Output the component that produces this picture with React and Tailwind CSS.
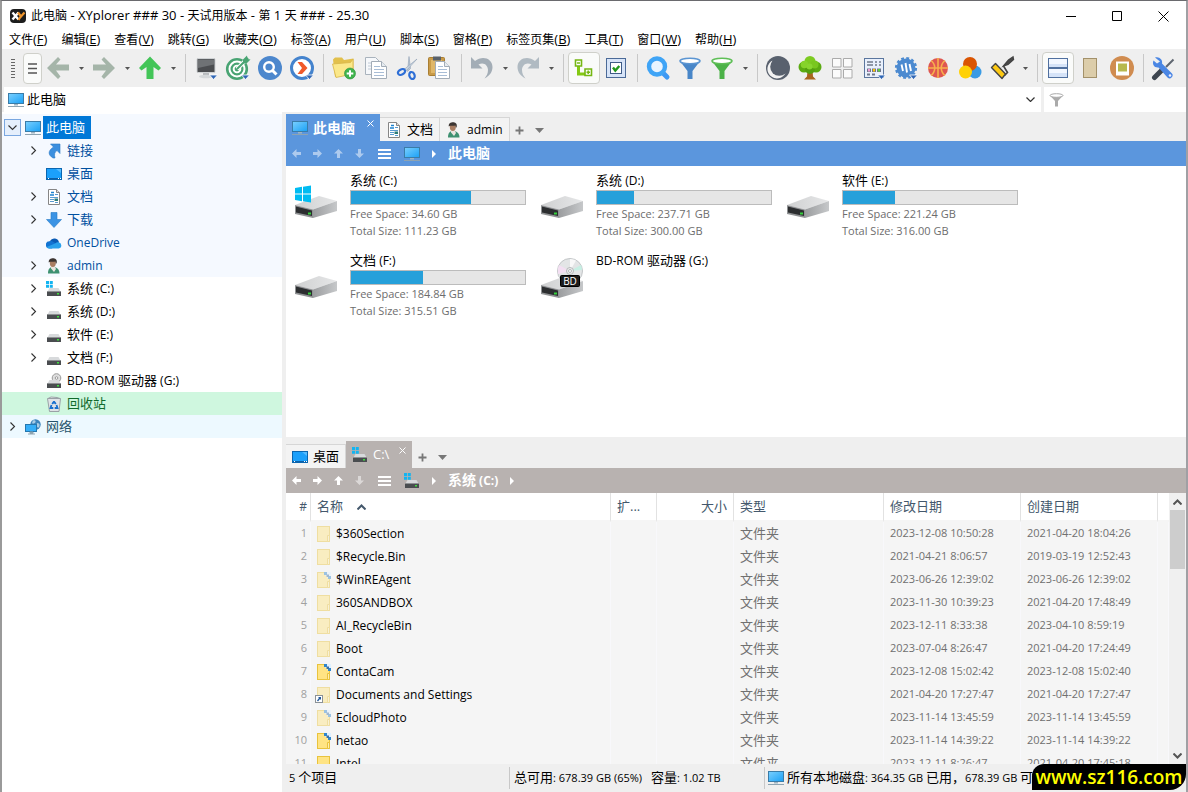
import { useId, useState } from 'react'
import clsx from 'clsx'

const CJK = /([\u3000-\u9fff\uff00-\uffef]+)/

// chinese and latin glyphs are set at different sizes
function Mixed({ children, cjk = 'text-[13px]' }) {
  return children.split(CJK).map((part, i) =>
    CJK.test(part) ? (
      <span key={i} className={cjk}>
        {part}
      </span>
    ) : (
      part
    )
  )
}

/* ---------- small icons ---------- */

function Svg({ w = 16, h = w, box = `0 0 ${w} ${h}`, className, children }) {
  return (
    <svg width={w} height={h} viewBox={box} fill="none" aria-hidden="true" className={clsx('shrink-0', className)}>
      {children}
    </svg>
  )
}

function MonitorIcon() {
  const id = useId()
  return (
    <Svg>
      <defs>
        <linearGradient id={id} x1="0" y1="0" x2="1" y2="1">
          <stop offset="0" stopColor="#7ad0ff" />
          <stop offset="1" stopColor="#1aa0f5" />
        </linearGradient>
      </defs>
      <rect x="0.5" y="1.5" width="15" height="10" fill={`url(#${id})`} stroke="#3a7ca8" />
      <path d="M6 12h4v1.5H6z" fill="#9fb4c2" />
      <path d="M0 14.5h16" stroke="#8ea3b1" />
    </Svg>
  )
}

function DesktopIcon() {
  return (
    <Svg>
      <rect x="0.5" y="2.5" width="15" height="11" fill="#1ba0fb" stroke="#0a66b0" />
      <path d="M10 3h5v4z" fill="#54bbff" />
      <path d="M1 12.5h14" stroke="#0c5fa6" />
      <path d="M2 12.5h1M12 12.5h1M14 12.5h1" stroke="#fff" />
    </Svg>
  )
}

function LinkIcon() {
  return (
    <Svg>
      <path d="M4.500 1h9.500v9.500l-3-3c-2.500 1.500-3 4-2 7.500h-2C2 12 1.500 8 7.500 4z" fill="#3b8fdf" stroke="#2b78c4" strokeWidth="0.600" />
    </Svg>
  )
}

function DocIcon() {
  return (
    <Svg>
      <path d="M2.500.5h8l3 3v12h-11z" fill="#fff" stroke="#868686" />
      <path d="M10.500.5v3h3" fill="#ddd" stroke="#868686" />
      <path d="M5 3.500h3M4 6h4" stroke="#1e83d0" strokeWidth="1.500" />
      <path d="M9 5.500h3M4 8.500h8M4 10.500h4M4 12.500h4M9 13.500h3" stroke="#5a9bd0" />
      <path d="M8.500 9.500h3.500v2.500H8.500z" fill="#2c7d78" />
    </Svg>
  )
}

function DownloadIcon() {
  return (
    <Svg>
      <path d="M5 .5h6v7h4.500L8 15.500.5 7.500H5z" fill="#3b93e4" stroke="#2478c6" strokeWidth="0.600" />
    </Svg>
  )
}

function OneDriveIcon() {
  return (
    <Svg>
      <path d="M4 6a4.800 4.800 0 0 1 9 1.500l-4 3-6-1z" fill="#0a5bb5" />
      <path d="M3.500 6.200C6 5.400 8 7 10 9l-4 4.500H3.500A3.600 3.600 0 0 1 3.500 6.200z" fill="#1273d2" />
      <path d="M12.500 7.200a3.200 3.200 0 0 1 .3 6.300H3c-1 0-2-.8-2.400-1.500L9 8.500c1-.8 2-1.300 3.500-1.300z" fill="#28a0ec" />
    </Svg>
  )
}

function UserIcon() {
  return (
    <Svg>
      <path d="M2 15.500c0-5 2-6.500 5-6.500s6.500 1.500 6.500 6.500z" fill="#3e9171" />
      <path d="M5 8h3.500l1.500 3-2 3-3-3.500z" fill="#e9e4df" />
      <ellipse cx="6.800" cy="5" rx="3" ry="4" fill="#a97d62" />
      <path d="M2.800 4.500C2.300 1 5 .2 7 .2s4.300 1 3.800 4.300L10 6l-.6-2.500C7 4 5 3.500 4 3.800z" fill="#3c3532" />
    </Svg>
  )
}

function SmallDrive({ windows, disc }) {
  return (
    <Svg>
      {disc && (
        <>
          <circle cx="10.500" cy="5" r="4.300" fill="#dedede" stroke="#999" />
          <circle cx="10.500" cy="5" r="1.300" fill="#fff" stroke="#999" />
        </>
      )}
      <path d="M3.500 7h9l2 3.500h-13z" fill="#d8dadc" />
      <path d="M1 10h14v5H1z" fill="#4a4d50" />
      <path d="M1 10h14v1H1z" fill="#8d9092" />
      <path d="M11 12h2v1.500h-2z" fill="#3fe03f" />
      {windows && <path d="M0 0h3v3H0zM3.800 0h3v3h-3zM0 3.800h3v3H0zM3.800 3.800h3v3h-3z" fill="#12b4f1" />}
    </Svg>
  )
}

function RecycleIcon() {
  return (
    <Svg>
      <path d="M1.500 2.500h13l-1.500 13H3.500z" fill="#dfe3e6" stroke="#9aa1a6" />
      <path d="M2 2.500 5 1l6 .5 3 1z" fill="#f8f8f8" stroke="#9aa1a6" />
      <path d="m8 5.500 1.800 2.500M8 5.500 6.200 8M5.500 9 4.500 12h2.800M10.500 9l1 3H8.700" stroke="#1670cf" strokeWidth="1.800" />
    </Svg>
  )
}

function NetworkIcon() {
  return (
    <Svg>
      <circle cx="10.500" cy="5.500" r="5.200" fill="#3d85bd" />
      <path d="M8 1.500c2-.8 3 0 2.500 1.500S8 5 7 4zM12 4c2 0 3 1 2.500 3s-2 2-3 .5z" fill="#a9cde6" />
      <rect x="0.500" y="5.500" width="11" height="7" fill="#35aef8" stroke="#2577ae" />
      <path d="M5 13h3v1.500H5zM3 15h7" fill="#8aa" stroke="#8ea3b1" />
    </Svg>
  )
}

function FolderIcon({ faded, marked, shortcut }) {
  return (
    <Svg className="overflow-visible">
      <g opacity={faded ? 0.45 : 1}>
        <rect x="0.500" y="0.500" width="12" height="15" fill="#ffe484" stroke="#e9c33d" />
        <path d="M10.500 9.500h2v6h-2z" fill="#ffeeb0" stroke="#e9c33d" />
        {marked && (
          <>
            <path d="M9 0h5v6h-3L8 3z" fill="#dff0ff" />
            <path d="M7 0h3v3H7zM11 4h3v3h-3z" fill="#2f86cc" />
            <path d="M9.500 2.500H12V5H9.500z" fill="#3c6fa0" />
          </>
        )}
      </g>
      {shortcut && (
        <>
          <rect x="-1.500" y="8.500" width="7" height="7" fill="#fff" stroke="#8b9197" />
          <path d="M1 10h3v3l-1-1-2 2.500-1-1L2 11z" fill="#245a9c" />
        </>
      )}
    </Svg>
  )
}

function BigDrive({ windows, disc }) {
  const id = useId()
  return (
    <Svg w={44} h={50}>
      <defs>
        <linearGradient id={`${id}t`} x1="0" y1="0" x2="1" y2="0">
          <stop offset="0" stopColor="#cfd0d1" />
          <stop offset="1" stopColor="#e6e7e8" />
        </linearGradient>
        <linearGradient id={`${id}s`} x1="0" y1="0" x2="1" y2="0">
          <stop offset="0" stopColor="#9b9d9f" />
          <stop offset="1" stopColor="#c6c8ca" />
        </linearGradient>
      </defs>
      <path d="m1 34 24-9 18 5-24 8.500z" fill={`url(#${id}t)`} />
      <path d="m19 38.500 24-8.500v10l-24 7z" fill={`url(#${id}s)`} />
      <path d="m1 34 18 4.500V47L1 43z" fill="#909294" />
      <path d="m2 35.500 16 4v5.500L2 41.500z" fill="#2c2e30" />
      <path d="M14 41.500h3v2h-3z" fill="#35d13c" />
      {windows && <path d="m1 17 7-1.200v6.700H1zM9 15.700l8-1.200v8H9zM1 23.500h7v6.700L1 29zM9 23.500h8v8l-8-1.200z" fill="#00bcf2" />}
      {disc && (
        <>
          <circle cx="30" cy="20" r="12.500" fill="#e3e5e6" stroke="#c2c5c7" />
          <path d="m30 20-11-6a12.500 12.500 0 0 0-1 9z" fill="#f3dff2" />
          <path d="m30 20 11-6a12.500 12.500 0 0 1 1 5z" fill="#c6efe3" />
          <path d="m30 20 0-12a12 12 0 0 1 6 1.500z" fill="#f8f8f8" />
          <circle cx="30" cy="20" r="3.500" fill="#eee" stroke="#b5b8ba" />
          <circle cx="30" cy="20" r="1.500" fill="#fff" stroke="#b5b8ba" />
          <rect x="20.500" y="24.500" width="19" height="11" rx="1" fill="#1b1b1b" stroke="#000" />
          <text x="30" y="33.500" textAnchor="middle" fontSize="10" fill="#fff" fontFamily="Open Sans, sans-serif">
            BD
          </text>
        </>
      )}
    </Svg>
  )
}

/* ---------- toolbar icons, all on a 26px box ---------- */

const more = <path d="M16.500 20h8l-4 4.500z" fill="#2f66b5" stroke="#fff" strokeWidth="0.800" />

const glyphs = {
  back: <path d="M2 13 13 2l2.500 2.500L11 9.500h13v6H11l4.500 6L13 24z" fill="#a5b5a9" />,
  forward: <path d="M24 13 13 2l-2.500 2.500L15 9.500H2v6h13l-4.500 6L13 24z" fill="#a5b5a9" />,
  up: <path d="M13 1.500 24 13l-2.500 2.500L16.500 12v12h-7V12l-5 3.500L2 13z" fill="#43c558" />,
  computer: (
    <>
      <rect x="4" y="3.500" width="18" height="14" rx="1" fill="#4b4d50" stroke="#cfd2d4" />
      <path d="M5 4.500h16v5L5 13z" fill="#6f7275" />
      <path d="M10 18h6v2.500h-6z" fill="#b8bbbe" />
      <ellipse cx="13" cy="21.500" rx="7" ry="1.800" fill="#d5d8da" />
      {more}
    </>
  ),
  target: (
    <>
      <circle cx="12" cy="14" r="9.800" fill="#fff" stroke="#49a473" strokeWidth="2.600" />
      <circle cx="12" cy="14" r="5.400" stroke="#49a473" strokeWidth="2.200" />
      <circle cx="12" cy="14" r="2.400" fill="#49a473" />
      <path d="m12 14 9-9" stroke="#fff" strokeWidth="4" />
      <path d="m12 14 11-11" stroke="#49a473" strokeWidth="2" />
      <path d="M18 4.500 22 .5l.5 3.500 3 .5-4 4h-3.500z" fill="#49a473" />
      {more}
    </>
  ),
  find: (
    <>
      <circle cx="13" cy="13" r="12" fill="#4c87cd" />
      <circle cx="12" cy="12" r="4.800" stroke="#fff" strokeWidth="2.400" />
      <path d="m15.500 15.500 4 4" stroke="#fff" strokeWidth="3" />
    </>
  ),
  go: (
    <>
      <circle cx="13" cy="13" r="10.500" fill="#fff" stroke="#4483cd" strokeWidth="3" />
      <path d="M8.500 7h4.500l5.500 6-5.500 6H8.500l4.500-6z" fill="#f05a2a" />
      {more}
    </>
  ),
  newFolder: (
    <>
      <path d="M2 4.500 4 2.500h7l2 2.500 9.500-1.500v15L4 22z" fill="#e2c04c" />
      <path d="m1.500 9 18-1.500L22 4v15L5 22.500z" fill="#fbe88a" stroke="#d8b547" strokeWidth="0.800" />
      <circle cx="19" cy="18.500" r="5.500" fill="#3fb44d" stroke="#2e8f3c" strokeWidth="0.600" />
      <path d="M19 15.200v6.600M15.700 18.500h6.600" stroke="#fff" strokeWidth="2" />
    </>
  ),
  copy: (
    <>
      <path d="M2.500 2.500h10l4 4v13h-14z" fill="#f6f8fb" stroke="#a9b3bd" />
      <path d="M5 8h5M5 11h5M5 14h5" stroke="#c0cad6" />
      <path d="M8.500 6.500h10l5 5v12h-15z" fill="#fff" stroke="#a2acb7" />
      <path d="M18.500 6.500v5h5" fill="#e6ebf0" stroke="#a2acb7" />
      <path d="M11 11.500h6M11 14.500h10M11 17.500h10M11 20.500h10" stroke="#a8bdd6" />
    </>
  ),
  cut: (
    <>
      <path d="m14 1.500 1.500 12-3 3z" fill="#b9c7d6" stroke="#8fa0b3" strokeWidth="0.600" />
      <path d="m22 4-11 12-2-1.500z" fill="#ccd7e3" stroke="#8fa0b3" strokeWidth="0.600" />
      <ellipse cx="6.500" cy="17" rx="3.800" ry="2.600" stroke="#2f6fd6" strokeWidth="2.200" transform="rotate(-25 6.500 17)" />
      <ellipse cx="17" cy="20.500" rx="2.600" ry="3.600" stroke="#2f6fd6" strokeWidth="2.200" transform="rotate(-20 17 20.500)" />
    </>
  ),
  paste: (
    <>
      <rect x="1.500" y="2.500" width="16" height="18" rx="1" fill="#c99b48" stroke="#a97e33" />
      <path d="M4 5h11v13H4z" fill="#e0b768" />
      <path d="M6 1.500h8v4H6z" fill="#59616a" />
      <path d="M8.500 6.500h9l5 5v12h-14z" fill="#fff" stroke="#a2acb7" />
      <path d="M17.500 6.500v5h5" fill="#e6ebf0" stroke="#a2acb7" />
      <path d="M11 11.500h5M11 14.500h9M11 17.500h9M11 20.500h9" stroke="#a8bdd6" />
    </>
  ),
  undo: <path d="M2 2v11.500h11.500L9.500 9.500c5-3 9.500.5 9.500 5.500 0 3.500-1.500 6-3.500 8.500 5-2.500 8-6.500 8-11.500C23.500 3 13 0 6 6z" fill="#a3adb6" />,
  redo: <path d="M24 2v11.500H12.500l4-4c-5-3-9.500.5-9.500 5.500 0 3.500 1.500 6 3.500 8.500-5-2.500-8-6.500-8-11.500C2.500 3 13 0 20 6z" fill="#b0bac2" />,
  tree: (
    <>
      <path d="M7.500 11v8H16" stroke="#84c914" strokeWidth="3" />
      <path d="M4.500 5h6v6h-6zM14 14h6.500v6.500H14z" fill="#fff" stroke="#76b714" strokeWidth="1.600" />
      <path d="M6 8h3M17.200 15.500v3.500M15.500 17.200H19" stroke="#76b714" strokeWidth="1.500" />
    </>
  ),
  check: (
    <>
      <rect x="3.500" y="3.500" width="19" height="19" fill="#d7e4f8" stroke="#4b6a98" />
      <rect x="7.500" y="7.500" width="11" height="11" fill="#fff" stroke="#3f5c87" />
      <path d="m10 12.500 2.300 3 4-4.500" stroke="#21981d" strokeWidth="2.400" />
    </>
  ),
  magnifier: (
    <>
      <path d="m17 17 5 5" stroke="#3d98f3" strokeWidth="5" strokeLinecap="round" />
      <circle cx="12" cy="11.500" r="8" fill="#e9f4ff" stroke="#3fa4f6" strokeWidth="4.400" />
    </>
  ),
  filterBlue: (
    <>
      <path d="M2.500 5.500 10.500 16v8h5v-8l8-10.500z" fill="#4886c8" />
      <ellipse cx="13" cy="6" rx="10" ry="2.800" fill="#fff" stroke="#5b95d2" strokeWidth="1.600" />
    </>
  ),
  filterGreen: (
    <>
      <path d="M2.500 5.500 10.500 16v8h5v-8l8-10.500z" fill="#4cb248" />
      <ellipse cx="13" cy="6" rx="10" ry="2.800" fill="#fff" stroke="#5fbf57" strokeWidth="1.600" />
    </>
  ),
  moon: (
    <>
      <circle cx="13" cy="13" r="12" fill="#59616e" />
      <path d="M7.500 5.500a9.500 9.500 0 1 0 13 12.500A10.200 10.200 0 0 1 7.500 5.500z" fill="#f2f2f2" />
      <circle cx="14.200" cy="11.800" r="9" fill="#59616e" />
    </>
  ),
  oak: (
    <>
      <path d="M10.500 15h5l.5 6.500 3 3H7l3-3z" fill="#a8651d" />
      <circle cx="7" cy="12" r="5.500" fill="#5cab12" />
      <circle cx="19" cy="12" r="5.500" fill="#5cab12" />
      <circle cx="13" cy="14" r="5" fill="#54a00f" />
      <circle cx="13" cy="6.500" r="5.500" fill="#7dcb22" />
      <circle cx="7.500" cy="9.500" r="3.800" fill="#86d32b" />
      <circle cx="17.500" cy="9.500" r="4" fill="#79c71f" />
      <circle cx="12.500" cy="11.500" r="3" fill="#88d52f" />
    </>
  ),
  tiles: (
    <path d="M3.500 3.500h8.500v8.500h-8.500zM14.500 3.500H23v8.500h-8.500zM3.500 14.500h8.500V23h-8.500zM14.500 14.500H23V23h-8.500z" fill="#fbfbfb" stroke="#ababab" />
  ),
  calendar: (
    <>
      <rect x="3.500" y="3.500" width="19" height="19" fill="#e9f0fc" stroke="#5b769e" />
      <path d="M6 7h6M6 10h6M14 7h2M14 10h2M18 7h2M18 10h2" stroke="#70798a" strokeWidth="1.600" />
      <path d="M6 19.500h3M11 19.500h3" stroke="#70798a" strokeWidth="2" />
      <path d="M6 13.500h4v3.500H6zM11 13.500h4v3.500h-4zM16 13.500h4v3.500h-4z" fill="#70798a" />
      <path d="M7 14h2v2.500H7z" fill="#f09ad4" />
      <path d="M12 14h2v2.500h-2z" fill="#ffc400" />
      <path d="M17 14h2v2.500h-2z" fill="#5cd03a" />
      {more}
    </>
  ),
  gear: (
    <>
      <circle cx="13" cy="13" r="9.500" fill="#4c8ad0" />
      <circle cx="13" cy="13" r="9.800" stroke="#4c8ad0" strokeWidth="2.600" strokeDasharray="2.800 2.330" />
      <path d="m8.500 9.500 1.500 6.500M12.500 8l1.500 9.500M16.500 9l1.500 7" stroke="#fff" strokeWidth="1.900" />
      {more}
    </>
  ),
  ball: (
    <>
      <circle cx="13" cy="13" r="10" fill="#de5650" />
      <path d="M13 3v20M3 13h20M6 5.500c5 4 5 11 0 15M20 5.500c-5 4-5 11 0 15" stroke="#f7b04c" strokeWidth="1.600" />
    </>
  ),
  colors: (
    <>
      <circle cx="18" cy="17" r="6.500" fill="#3a9be4" />
      <circle cx="13" cy="9" r="7" fill="#da5502" />
      <circle cx="8.500" cy="17" r="6.500" fill="#ffd106" />
    </>
  ),
  roller: (
    <>
      <path d="m14.500 11 5-6L24 2l.5 2.500-5.500 5z" fill="#4a4a4a" stroke="#444" strokeWidth="1.400" />
      <path d="m14.500 11 4 6.500-3 3" stroke="#444" strokeWidth="1.600" />
      <path d="m2.500 12.500 4-4L16.500 19l-3.500 4.500z" fill="#fdc913" stroke="#444" strokeWidth="1.400" strokeLinejoin="round" />
    </>
  ),
  panes: (
    <>
      <rect x="3.500" y="3.500" width="19" height="19" fill="#f2f7ff" stroke="#50709f" />
      <path d="M4 9h18v3H4zM4 18h18v4H4z" fill="#d5e3f8" />
      <path d="M3 13h20" stroke="#50709f" strokeWidth="2" />
    </>
  ),
  page: <rect x="6.500" y="3.500" width="13" height="19" fill="#dccdaa" stroke="#a3916a" />,
  photo: (
    <>
      <circle cx="13" cy="13" r="12" fill="#d08c50" />
      <path d="M7 6.500h13v14H7z" fill="#fff" />
      <path d="M9 8.500h9v8H9z" fill="#b7b94e" />
    </>
  ),
  tools: (
    <>
      <path d="M22.500 4.500 15 12" stroke="#5f6670" strokeWidth="2" />
      <path d="m3.500 22.500 7-7" stroke="#3e4650" strokeWidth="5" strokeLinecap="round" />
      <path d="M4 2.500c4-1.500 8 2 7 6l9.500 9.500a3 3 0 0 1-4 4.500L7.500 12.500C3 13 1 9 2.500 5.500l3.500 3 3-2z" fill="#4a86e4" />
      <circle cx="19" cy="20.500" r="1.300" fill="#eef" />
    </>
  ),
}

const toolbar = [
  ['back', '后退', 'menu'], ['forward', '前进', 'menu'], ['up', '向上', 'menu'], null,
  ['computer', '位置'], ['target', '目标'], ['find', '查找'], ['go', '转到'], null,
  ['newFolder', '新建文件夹'], ['copy', '复制'], ['cut', '剪切'], ['paste', '粘贴'], null,
  ['undo', '撤销', 'menu'], ['redo', '重做', 'menu'], null,
  ['tree', '显示树', 'on'], ['check', '复选框'], null,
  ['magnifier', '搜索'], ['filterBlue', '可视过滤'], ['filterGreen', '快速过滤', 'menu'], null,
  ['moon', '深色模式'], ['oak', '迷你树'], ['tiles', '平铺'], ['calendar', '视图'], ['gear', '设置'],
  ['ball', '幽灵过滤'], ['colors', '颜色过滤'], ['roller', '涂色', 'menu'], null,
  ['panes', '双窗格', 'on'], ['page', '预览'], ['photo', '浮动预览'], null,
  ['tools', '配置'],
]

const menus = [
  ['文件', 'F'], ['编辑', 'E'], ['查看', 'V'], ['跳转', 'G'], ['收藏夹', 'O'], ['标签', 'A'], ['用户', 'U'],
  ['脚本', 'S'], ['窗格', 'P'], ['标签页集', 'B'], ['工具', 'T'], ['窗口', 'W'], ['帮助', 'H'],
]

const blue = 'text-[#0050a0]'

const tree = [
  { label: '链接', icon: <LinkIcon />, more: true, color: blue, bg: 'bg-[#f5f9ff]' },
  { label: '桌面', icon: <DesktopIcon />, color: blue, bg: 'bg-[#f5f9ff]' },
  { label: '文档', icon: <DocIcon />, more: true, color: blue, bg: 'bg-[#f5f9ff]' },
  { label: '下载', icon: <DownloadIcon />, more: true, color: blue, bg: 'bg-[#f5f9ff]' },
  { label: 'OneDrive', icon: <OneDriveIcon />, color: blue, bg: 'bg-[#f5f9ff]' },
  { label: 'admin', icon: <UserIcon />, more: true, color: blue, bg: 'bg-[#f5f9ff]' },
  { label: '系统 (C:)', icon: <SmallDrive windows />, more: true },
  { label: '系统 (D:)', icon: <SmallDrive />, more: true },
  { label: '软件 (E:)', icon: <SmallDrive />, more: true },
  { label: '文档 (F:)', icon: <SmallDrive />, more: true },
  { label: 'BD-ROM 驱动器 (G:)', icon: <SmallDrive disc /> },
  { label: '回收站', icon: <RecycleIcon />, color: 'text-[#126a2c]', bg: 'bg-[#cff7df]' },
]

const drives = [
  { name: '系统 (C:)', free: '34.60 GB', total: '111.23 GB', used: 69, windows: true },
  { name: '系统 (D:)', free: '237.71 GB', total: '300.00 GB', used: 21 },
  { name: '软件 (E:)', free: '221.24 GB', total: '316.00 GB', used: 30 },
  { name: '文档 (F:)', free: '184.84 GB', total: '315.51 GB', used: 41.5 },
  { name: 'BD-ROM 驱动器 (G:)', disc: true },
]

const files = [
  { name: '$360Section', faded: true, modified: '2023-12-08 10:50:28', created: '2021-04-20 18:04:26' },
  { name: '$Recycle.Bin', faded: true, modified: '2021-04-21 8:06:57', created: '2019-03-19 12:52:43' },
  { name: '$WinREAgent', faded: true, marked: true, modified: '2023-06-26 12:39:02', created: '2023-06-26 12:39:02' },
  { name: '360SANDBOX', faded: true, modified: '2023-11-30 10:39:23', created: '2021-04-20 17:48:49' },
  { name: 'AI_RecycleBin', faded: true, modified: '2023-12-11 8:33:38', created: '2023-04-10 8:59:19' },
  { name: 'Boot', faded: true, modified: '2023-07-04 8:26:47', created: '2021-04-20 17:24:49' },
  { name: 'ContaCam', marked: true, modified: '2023-12-08 15:02:42', created: '2023-12-08 15:02:40' },
  { name: 'Documents and Settings', faded: true, shortcut: true, modified: '2021-04-20 17:27:47', created: '2021-04-20 17:27:47' },
  { name: 'EcloudPhoto', faded: true, marked: true, modified: '2023-11-14 13:45:59', created: '2023-11-14 13:45:59' },
  { name: 'hetao', marked: true, modified: '2023-11-14 14:39:22', created: '2023-11-14 14:39:22' },
  { name: 'Intel', modified: '2023-12-11 8:26:47', created: '2021-04-20 17:45:18' },
]

function Caret({ label }) {
  return (
    <button type="button" aria-label={label} className="flex h-8 w-[14px] items-center justify-center">
      <Svg w={5} h={3}>
        <path d="M0 0h5L2.500 3z" fill="#555" />
      </Svg>
    </button>
  )
}

function TitleBar() {
  return (
    <header className="flex h-[30px] shrink-0 items-center bg-white pl-2">
      <Svg>
        <rect width="16" height="14" y="1" rx="4" fill="#1d1d1d" />
        <path d="m2.500 4.500 6 7M8.500 4.500l-6 7" stroke="#fff" strokeWidth="2.400" />
        <path d="m8 4.500 3 4 3.500-4M11 8l-2.500 4" stroke="#f0962d" strokeWidth="2.200" />
      </Svg>
      <h1 className="ml-[5px] flex-1 text-[13px]">
        <Mixed cjk="text-xs">此电脑 - XYplorer ### 30 - 天试用版本 - 第 1 天 ### - 25.30</Mixed>
      </h1>
      <button type="button" aria-label="最小化" className="flex h-full w-[46px] items-center justify-center">
        <Svg w={11}><path d="M0 5.500h10" stroke="#000" /></Svg>
      </button>
      <button type="button" aria-label="最大化" className="flex h-full w-[46px] items-center justify-center">
        <Svg w={11}><path d="M.5.5h9v9h-9z" stroke="#000" /></Svg>
      </button>
      <button type="button" aria-label="关闭" className="flex h-full w-[46px] items-center justify-center">
        <Svg w={11}><path d="m.5.5 10 10M10.500.5l-10 10" stroke="#000" /></Svg>
      </button>
    </header>
  )
}

function Toolbar() {
  return (
    <div role="toolbar" className="flex h-[38px] shrink-0 items-center bg-[#efefef]">
      <div className="flex w-[21px] justify-center">
        <Svg w={4} h={19}><path d="M2 0v19" stroke="#666" strokeWidth="4" strokeDasharray="1 2" /></Svg>
      </div>
      <button
        type="button"
        aria-label="菜单"
        className="flex h-[31px] w-[19px] items-center justify-center rounded-[4px] border border-[#cfd0ca] bg-[#fafbfa]"
      >
        <Svg w={9} h={11}><path d="M0 1h9M0 5.500h9M0 10h9" stroke="#555" strokeWidth="1.500" /></Svg>
      </button>
      {toolbar.map((item, i) =>
        item ? (
          <div key={item[0]} className="flex items-center">
            <button
              type="button"
              title={item[1]}
              aria-label={item[1]}
              className={clsx(
                'flex h-8 w-8 items-center justify-center',
                item[2] === 'on' && 'rounded-[4px] border border-[#cfd0ca] bg-[#fafbfa]'
              )}
            >
              <Svg w={26}>{glyphs[item[0]]}</Svg>
            </button>
            {item[2] === 'menu' && <Caret label={`${item[1]}选项`} />}
          </div>
        ) : (
          <div key={i} className="flex w-[10px] justify-center">
            <div className="h-7 w-px bg-[#c8c8c8]" />
          </div>
        )
      )}
    </div>
  )
}

function AddressBar() {
  const [path, setPath] = useState('此电脑')
  const [filter, setFilter] = useState('')
  return (
    <div className="flex h-[25px] shrink-0 gap-[3px] bg-[#efefef] pl-[2px]">
      <div className="flex min-w-0 flex-1 items-center bg-white pl-1">
        <MonitorIcon />
        <input
          aria-label="地址"
          value={path}
          onChange={(e) => setPath(e.target.value)}
          className="ml-[3px] min-w-0 flex-1 text-[13px] outline-none"
        />
        <button type="button" aria-label="历史" className="flex h-full w-[22px] items-center justify-center">
          <Svg w={9} h={5}><path d="m.5.5 4 4 4-4" stroke="#333" strokeWidth="1.200" /></Svg>
        </button>
      </div>
      <div className="flex w-[142px] items-center bg-white pl-[5px]">
        <Svg w={15} h={14}>
          <path d="M1 2.500 6 8v5.500h3V8l5-5.500z" fill="#aaa" />
          <ellipse cx="7.500" cy="2.500" rx="6.500" ry="1.800" fill="#fff" stroke="#aaa" />
        </Svg>
        <input
          aria-label="过滤"
          value={filter}
          onChange={(e) => setFilter(e.target.value)}
          className="min-w-0 flex-1 text-xs outline-none"
        />
      </div>
    </div>
  )
}

function Expander({ open, boxed }) {
  return (
    <button
      type="button"
      aria-label={open ? '折叠' : '展开'}
      className={clsx('mr-1 flex h-[17px] w-[17px] shrink-0 items-center justify-center', boxed && 'border border-[#7aa7e0] bg-[#e5effc]')}
    >
      <Svg w={9}>
        <path d={open ? 'm.5 2.500 4 4 4-4' : 'm2.500.5 4 4-4 4'} stroke="#333" strokeWidth="1.100" />
      </Svg>
    </button>
  )
}

function TreeLabel({ children, className }) {
  return (
    <button type="button" className={clsx('ml-[2px] h-full pr-[6px] pl-[3px] text-xs whitespace-nowrap', className)}>
      <Mixed>{children}</Mixed>
    </button>
  )
}

function Tree() {
  return (
    <nav aria-label="文件夹" className="w-[280px] shrink-0 overflow-hidden bg-white pt-[2px]">
      <div className="bg-[#f5f9ff] pt-[2px]">
        <div className="flex h-[23px] items-center pl-[2px]">
          <Expander open boxed />
          <MonitorIcon />
          <TreeLabel className="bg-[#0078d7] text-white">此电脑</TreeLabel>
        </div>
      </div>
      <ul>
        {tree.map((n) => (
          <li key={n.label} className={clsx('flex h-[23px] items-center pl-[23px]', n.bg)}>
            {n.more ? <Expander /> : <span className="w-[21px] shrink-0" />}
            {n.icon}
            <TreeLabel className={n.color}>{n.label}</TreeLabel>
          </li>
        ))}
      </ul>
      <div className="flex h-[23px] items-center bg-[#edf9ff] pl-[2px]">
        <Expander />
        <NetworkIcon />
        <TreeLabel className="text-[#26536a]">网络</TreeLabel>
      </div>
    </nav>
  )
}

function Tab({ icon, children, active, className }) {
  if (active) {
    return (
      <div className={clsx('flex items-center self-stretch pl-[6px] text-white', className)}>
        {icon}
        <button type="button" role="tab" aria-selected="true" className="ml-[5px] pr-1 text-[13px]">
          <Mixed cjk="text-[14px] font-bold">{children}</Mixed>
        </button>
        <button type="button" aria-label="关闭标签" className="mt-[6px] mr-[6px] ml-auto self-start">
          <Svg w={7}><path d="m.5.5 6 6M6.500.5l-6 6" stroke="#fff" /></Svg>
        </button>
      </div>
    )
  }
  return (
    <button
      type="button"
      role="tab"
      aria-selected="false"
      className="flex h-6 items-center gap-[5px] self-end border-t border-r border-[#d6d6d6] bg-[#f3f3f3] px-[6px] text-xs"
    >
      {icon}
      <span><Mixed>{children}</Mixed></span>
    </button>
  )
}

function TabEnd() {
  return (
    <div className="mb-px flex h-5 items-center self-end">
      <button type="button" aria-label="新标签" className="flex w-5 justify-center">
        <Svg w={9}><path d="M4.500.5v8M.5 4.500h8" stroke="#777" strokeWidth="1.800" /></Svg>
      </button>
      <button type="button" aria-label="标签列表" className="flex w-5 justify-center">
        <Svg w={9} h={5}><path d="M0 0h9L4.500 5z" fill="#777" /></Svg>
      </button>
    </div>
  )
}

const dirs = [
  ['后退', 'rotate-0'],
  ['前进', 'rotate-180'],
  ['向上', 'rotate-90'],
  ['向下', '-rotate-90'],
]

function PathBar({ dim, icon, children, tail, className }) {
  return (
    <div className={clsx('flex h-[25px] shrink-0 items-center text-white', className)}>
      {dirs.map(([label, turn], i) => (
        <button key={label} type="button" aria-label={label} className="flex w-[21px] justify-center">
          <Svg w={9} className={clsx(turn, (dim || i === 3) && 'opacity-50')}>
            <path d="M0 4.500 4.500 0v3H9v3H4.500v3z" fill="#fff" />
          </Svg>
        </button>
      ))}
      <button type="button" aria-label="菜单" className="flex w-7 justify-center">
        <Svg w={13} h={10}><path d="M0 1h13M0 5h13M0 9h13" stroke="#fff" strokeWidth="2" /></Svg>
      </button>
      <span className="flex w-7 justify-center">{icon}</span>
      <Svg w={16} h={8}><path d="m6 0 4 4-4 4z" fill="#fff" /></Svg>
      <button type="button" className="mx-[6px] text-xs font-bold">
        <Mixed cjk="text-[14px]">{children}</Mixed>
      </button>
      {tail && <Svg w={16} h={8}><path d="m6 0 4 4-4 4z" fill="#fff" /></Svg>}
    </div>
  )
}

function Drive({ d }) {
  return (
    <li className="flex h-20 gap-3">
      <BigDrive windows={d.windows} disc={d.disc} />
      <div className="w-44 text-[11px] leading-[17px] text-[#6d6d6d]">
        <p className="text-xs leading-[19px] whitespace-nowrap text-black">
          <Mixed>{d.name}</Mixed>
        </p>
        {d.free && (
          <>
            <div className="h-[15px] border border-[#bcbcbc] bg-[#e6e6e6]">
              <div className="h-full bg-[#26a0da]" style={{ width: `${d.used}%` }} />
            </div>
            <p>Free Space: {d.free}</p>
            <p>Total Size: {d.total}</p>
          </>
        )}
      </div>
    </li>
  )
}

function TopPane() {
  return (
    <section className="flex min-h-0 flex-[325_1_0px] flex-col">
      <div role="tablist" className="flex h-[29px] shrink-0 pt-[2px]">
        <Tab active icon={<MonitorIcon />} className="w-[94px] bg-[#5b96dd]">此电脑</Tab>
        <Tab icon={<DocIcon />}>文档</Tab>
        <Tab icon={<UserIcon />}>admin</Tab>
        <TabEnd />
      </div>
      <PathBar dim icon={<MonitorIcon />} className="bg-[#5b96dd]">此电脑</PathBar>
      <ul className="grid min-h-0 flex-1 grid-cols-[repeat(auto-fill,246px)] content-start overflow-hidden bg-white pt-[5px] pl-2">
        {drives.map((d) => (
          <Drive key={d.name} d={d} />
        ))}
      </ul>
    </section>
  )
}

const th = 'h-[29px] border-r border-r-[#e2e2e2] border-b-2 border-b-[#f5f5f5] bg-white px-[6px] text-left text-[13px] font-normal whitespace-nowrap'

function FileTable() {
  return (
    <div className="flex min-h-0 flex-1 bg-[#f5f5f5]">
      <div className="min-w-0 flex-1 overflow-hidden">
        <table className="w-full table-fixed border-separate border-spacing-0">
          <colgroup>
            <col className="w-[25px]" />
            <col />
            <col className="w-[46px]" />
            <col className="w-[77px]" />
            <col className="w-[150px]" />
            <col className="w-[137px]" />
            <col className="w-[137px]" />
            <col className="w-[11px]" />
          </colgroup>
          <thead className="text-[#44586c]">
            <tr>
              <th className="h-[29px] border-r border-b-2 border-r-[#e2e2e2] border-b-[#f5f5f5] bg-white pr-[3px] text-right text-xs font-normal">#</th>
              <th className={th}>
                <span className="flex items-center gap-[14px]">
                  名称
                  <Svg w={9} h={6}><path d="m.5 5.500 4-4 4 4" stroke="#44586c" strokeWidth="2" /></Svg>
                </span>
              </th>
              <th className={th}>扩...</th>
              <th className={clsx(th, 'text-right')}>大小</th>
              <th className={th}>类型</th>
              <th className={th}>修改日期</th>
              <th className={th}>创建日期</th>
              <th aria-label="空" className="border-b-2 border-b-[#f5f5f5] bg-white" />
            </tr>
          </thead>
          <tbody className="text-[11px] text-[#707070] [&_td]:h-[23px] [&_td]:border-r [&_td]:border-[#f8f8fb] [&_td]:py-0">
            {files.map((f, i) => (
              <tr key={f.name}>
                <td className="pr-[3px] text-right text-[#a0a0a0]">{i + 1}</td>
                <td className="pl-[6px]">
                  <span className="flex items-center gap-[3px] text-xs text-black">
                    <FolderIcon faded={f.faded} marked={f.marked} shortcut={f.shortcut} />
                    {f.name}
                  </span>
                </td>
                <td />
                <td />
                <td className="pl-[6px] text-[13px]">文件夹</td>
                <td className="pl-[6px] whitespace-nowrap">{f.modified}</td>
                <td className="pl-[6px] whitespace-nowrap">{f.created}</td>
                <td />
              </tr>
            ))}
          </tbody>
        </table>
      </div>
      <div className="flex w-[17px] shrink-0 flex-col items-center bg-[#f0f0f0]">
        <button type="button" aria-label="向上滚动" className="flex h-[17px] w-full items-center justify-center">
          <Svg w={9} h={6}><path d="m.5 5.500 4-4 4 4" stroke="#555" strokeWidth="2" /></Svg>
        </button>
        <div className="h-[59px] w-[15px] bg-[#cdcdcd]" />
        <button type="button" aria-label="向下滚动" className="mt-auto flex h-[17px] w-full items-center justify-center">
          <Svg w={9} h={6}><path d="m.5.5 4 4 4-4" stroke="#555" strokeWidth="2" /></Svg>
        </button>
      </div>
    </div>
  )
}

function BottomPane() {
  return (
    <section className="flex min-h-0 flex-[327_1_0px] flex-col">
      <div role="tablist" className="flex h-[31px] shrink-0 pt-1">
        <Tab icon={<DesktopIcon />}>桌面</Tab>
        <Tab active icon={<SmallDrive windows />} className="w-[66px] bg-[#b8b2b0]">C:\</Tab>
        <TabEnd />
      </div>
      <PathBar tail icon={<SmallDrive windows />} className="bg-[#b8b2b0]">系统 (C:)</PathBar>
      <FileTable />
    </section>
  )
}

function StatusBar() {
  return (
    <footer className="relative flex h-7 shrink-0 items-center overflow-hidden text-[11px] whitespace-nowrap">
      <p className="w-[223px] pl-[3px]"><Mixed>5 个项目</Mixed></p>
      <p className="flex h-[22px] w-[255px] items-center border-l border-[#c8c8c8] pl-1">
        <span><Mixed>总可用: 678.39 GB (65%)</Mixed></span>
        <span className="ml-[9px]"><Mixed>容量: 1.02 TB</Mixed></span>
      </p>
      <p className="flex h-[22px] items-center gap-[3px] border-l border-[#c8c8c8] pl-[3px]">
        <MonitorIcon />
        <span><Mixed>所有本地磁盘: 364.35 GB 已用，678.39 GB 可用</Mixed></span>
      </p>
      <a
        href="#"
        className="absolute right-0 bottom-[2px] flex h-[26px] w-[154px] items-center justify-center rounded-tl-[12px] rounded-br-[16px] bg-black text-[19px] font-semibold text-[#ffff00]"
      >
        www.sz116.com
      </a>
    </footer>
  )
}

export default function App() {
  return (
    <div className="flex h-screen flex-col overflow-hidden border-t border-r-2 border-l-2 border-t-[#6a6a6e] border-r-[#a0a0a4] border-l-[#9a9a9a] bg-[#efefef] font-['Open_Sans','Noto_Sans_CJK_SC',sans-serif] text-black">
      <TitleBar />
      <nav aria-label="主菜单" className="flex h-[18px] shrink-0 items-center gap-[14px] bg-white pl-[7px] text-[13px]">
        {menus.map(([name, key]) => (
          <button key={name} type="button" className="whitespace-nowrap">
            <span className="text-xs">{name}</span>(<u>{key}</u>)
          </button>
        ))}
      </nav>
      <Toolbar />
      <AddressBar />
      <div className="flex min-h-0 flex-1">
        <Tree />
        <main className="ml-1 flex min-w-0 flex-1 flex-col">
          <TopPane />
          <BottomPane />
          <StatusBar />
        </main>
      </div>
    </div>
  )
}
